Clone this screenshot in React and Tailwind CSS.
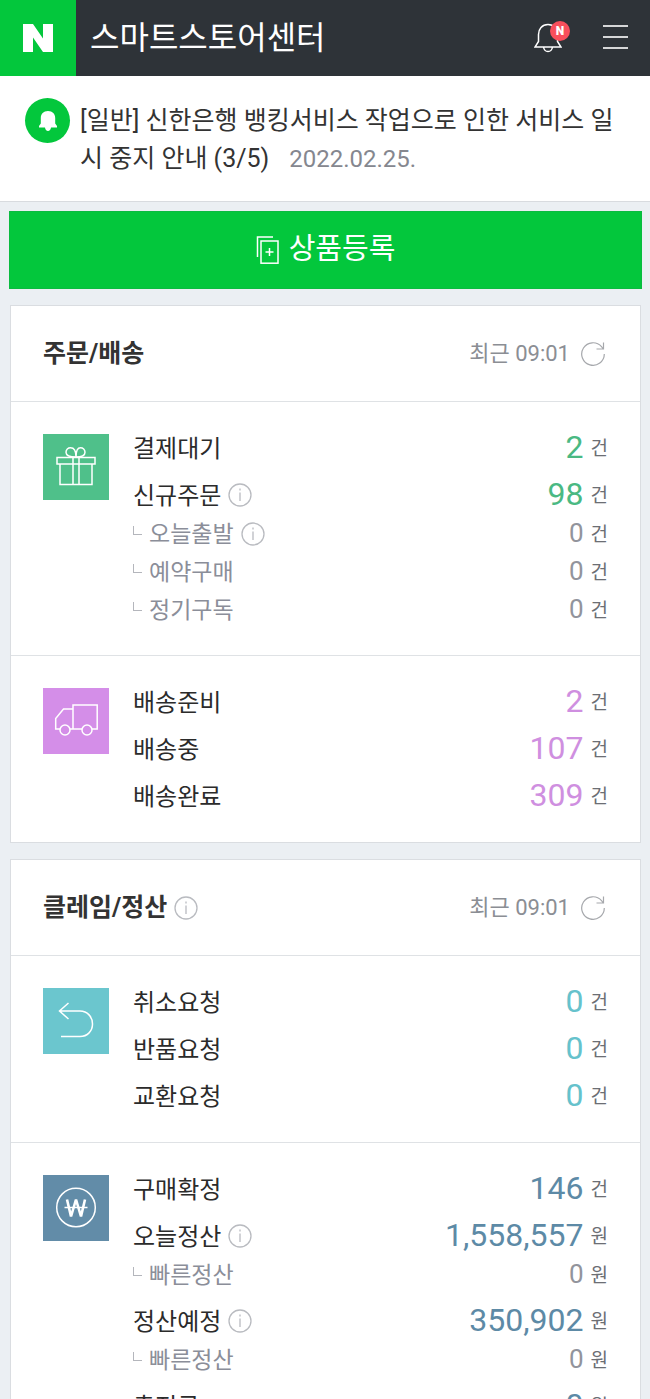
const orderSections = [
  {
    icon: "gift",
    box: "bg-[#4fc08a]",
    color: "text-[#4ab983]",
    rows: [
      { label: "결제대기", value: "2", unit: "건" },
      { label: "신규주문", value: "98", unit: "건", info: true },
      { label: "오늘출발", value: "0", unit: "건", sub: true, info: true },
      { label: "예약구매", value: "0", unit: "건", sub: true },
      { label: "정기구독", value: "0", unit: "건", sub: true },
    ],
  },
  {
    icon: "truck",
    box: "bg-[#d48ee8]",
    color: "text-[#cf8fe0]",
    rows: [
      { label: "배송준비", value: "2", unit: "건" },
      { label: "배송중", value: "107", unit: "건" },
      { label: "배송완료", value: "309", unit: "건" },
    ],
  },
];

const claimSections = [
  {
    icon: "return",
    box: "bg-[#6bc6ce]",
    color: "text-[#66c2cc]",
    rows: [
      { label: "취소요청", value: "0", unit: "건" },
      { label: "반품요청", value: "0", unit: "건" },
      { label: "교환요청", value: "0", unit: "건" },
    ],
  },
  {
    icon: "won",
    box: "bg-[#628ca8]",
    color: "text-[#5d8aa6]",
    rows: [
      { label: "구매확정", value: "146", unit: "건" },
      { label: "오늘정산", value: "1,558,557", unit: "원", info: true },
      { label: "빠른정산", value: "0", unit: "원", sub: true },
      { label: "정산예정", value: "350,902", unit: "원", info: true },
      { label: "빠른정산", value: "0", unit: "원", sub: true },
      { label: "충전금", value: "0", unit: "원" },
    ],
  },
];

// 66x66 기준 아이콘
const iconPaths = {
  gift: (
    <>
      <rect x="14" y="23.500" width="38" height="6.500" />
      <path d="M17 30v20.500h32V30M30 23.500v27M36 23.500v27" />
      <path d="M33 23c-4 0-10-.5-10-4.800 0-2.700 2-4.400 4.500-4.400 3.800 0 5.500 4.200 5.500 9.200zM33 23c4 0 9-.5 9-4.800 0-2.700-2-4.400-4.500-4.400-3.300 0-4.500 4.200-4.500 9.200z" />
    </>
  ),
  truck: (
    <>
      <path d="M17 41h-4.300V30.500L20.500 21H30M30 41V17h24.200v24H49M27 41h12" />
      <circle cx="22" cy="42" r="5" />
      <circle cx="44" cy="42" r="5" />
    </>
  ),
  return: (
    <path d="M25.500 15l-9 8 9 8M16.500 23H37c7.500 0 12.500 6 12.500 13S44.500 48.500 37 48.500H18" />
  ),
  won: (
    <>
      <circle cx="33" cy="32.500" r="19.300" />
      <path strokeWidth="2.600" strokeLinejoin="bevel" d="M24 24.500l4 17 5-17 5 17 4-17" />
      <path d="M21.500 32.500h23" />
    </>
  ),
};

function InfoButton({ label }) {
  return (
    <button type="button" aria-label={`${label} 안내`} className="ml-[7px] shrink-0">
      <svg className="size-6" viewBox="0 0 24 24" fill="none" stroke="#b9bbc0" strokeWidth="1.300">
        <circle cx="12" cy="12" r="11" />
        <path d="M12 9.500v8.500M12 5.500v2" />
      </svg>
    </button>
  );
}

function Row({ row, color }) {
  const { label, value, unit, sub, info } = row;
  return (
    <li
      className={
        sub
          ? "flex h-[38px] items-center justify-between"
          : "mt-[7px] flex h-10 items-center justify-between first:mt-0"
      }
    >
      <div className="flex items-center pt-0.5">
        {sub && <span className="mr-[7px] mb-2 size-[9px] border-b border-l border-[#b4b6bc]" />}
        <span className={sub ? "pt-0.5 text-[23px] text-[#8b8e99]" : "pt-0.5 text-2xl text-[#2b2b2b]"}>
          {label}
        </span>
        {info && <InfoButton label={label} />}
      </div>
      <a href="#" className="flex items-center">
        <span className={sub ? "text-[26px] text-[#92949c]" : `text-[32px] ${color}`}>{value}</span>
        <span className="ml-[7px] pt-1 text-[19px] text-[#6c6e74]">{unit}</span>
      </a>
    </li>
  );
}

function Card({ title, info, sections }) {
  return (
    <section className="mt-4 mr-[9px] ml-2.5 border border-[#dadde1] bg-white">
      <header className="flex h-[95px] items-center justify-between pr-[34px] pl-8">
        <div className="flex items-center">
          <h2 className="text-[25px] font-bold text-[#333]">{title}</h2>
          {info && <InfoButton label={title} />}
        </div>
        <div className="flex items-center gap-2.5">
          <span className="text-[22px] text-[#8b8e94]">최근 09:01</span>
          <button type="button" aria-label="새로고침">
            <svg className="size-[26px]" viewBox="0 0 26 26" fill="none" stroke="#a6a8ac" strokeWidth="1.200">
              <path d="M24.300 13A11.300 11.300 0 1 1 21.500 5.600L23 7.500M23.500 1.500V8h-7" />
            </svg>
          </button>
        </div>
      </header>
      {sections.map((s) => (
        <div key={s.icon} className="flex border-t border-[#dfe2e5] px-8 pt-[25px] pb-[27px]">
          <div className={`mt-[7px] size-[66px] shrink-0 ${s.box}`}>
            <svg viewBox="0 0 66 66" fill="none" stroke="#fff" strokeWidth="1.500">
              {iconPaths[s.icon]}
            </svg>
          </div>
          <ul className="ml-6 flex-1">
            {s.rows.map((row, i) => (
              <Row key={i} row={row} color={s.color} />
            ))}
          </ul>
        </div>
      ))}
    </section>
  );
}

export default function App() {
  return (
    <div className="min-h-screen bg-[#ebeff3] font-[Roboto,'Noto_Sans_CJK_KR',sans-serif]">
      <header className="flex h-[76px] items-center bg-[#2e3338]">
        <a href="#" aria-label="네이버" className="flex size-[76px] items-center justify-center bg-[#03c73c]">
          <svg className="h-7 w-[30px]" viewBox="0 0 30 28" fill="#fff">
            <path d="M0 0h10l10 14.500V0h10v28H20L10 13.500V28H0z" />
          </svg>
        </a>
        <h1 className="ml-3.5 text-[32px] text-white">스마트스토어센터</h1>
        <button type="button" aria-label="알림" className="relative ml-auto">
          <svg className="h-[30px] w-7" viewBox="0 0 28 30" fill="none" stroke="#fff" strokeWidth="1.500">
            <path d="M14 1.500c-6 0-9.500 4.500-9.500 10v7L1 24h26l-3.500-5.500v-7c0-5.500-3.500-10-9.500-10zM9.500 24c.5 3 2.300 4.500 4.500 4.500s4-1.500 4.500-4.500" />
          </svg>
          <span className="absolute -top-0.5 left-4 flex size-5 items-center justify-center rounded-full bg-[#f94f5c] text-xs font-black text-white">
            N
          </span>
        </button>
        <button type="button" aria-label="메뉴" className="mr-[22px] mb-0.5 ml-[41px] flex w-[25px] flex-col gap-[9px]">
          <span className="h-0.5 w-full bg-[#d5d6d7]" />
          <span className="h-0.5 w-full bg-[#d5d6d7]" />
          <span className="h-0.5 w-full bg-[#d5d6d7]" />
        </button>
      </header>

      <a href="#" className="flex h-[126px] border-b border-[#d8dbdf] bg-white pt-[22px] pr-8 pl-[25px]">
        <span className="flex size-[45px] shrink-0 items-center justify-center rounded-full bg-[#03c73c]">
          <svg className="h-5 w-[18px]" viewBox="0 0 18 20" fill="#fff">
            <path d="M9 0C4.500 0 1.800 3 1.800 7v5.500L0 15v1.500h6C6.300 18.500 7.400 20 9 20s2.700-1.500 3-3.500h6V15l-1.800-2.500V7c0-4-2.700-7-7.200-7z" />
          </svg>
        </span>
        <p className="mt-1 ml-2.5 text-[25px] leading-[38px] text-[#333]">
          [일반] 신한은행 뱅킹서비스 작업으로 인한 서비스 일시 중지 안내 (3/5)
          <time className="ml-5 text-2xl leading-[38px] text-[#85878f]">2022.02.25.</time>
        </p>
      </a>

      <div className="pt-[9px] pr-2 pl-[9px]">
        <button
          type="button"
          className="flex h-[78px] w-full items-center justify-center gap-2.5 border border-[#0abb40] bg-[#03c73c] text-[29px] text-white"
        >
          <svg className="h-7 w-[23px]" viewBox="0 0 23 28" fill="none" stroke="#fff" strokeWidth="1.500">
            <path d="M1.500 21V1H17" />
            <rect x="5" y="5" width="17" height="22.200" />
            <path d="M13.500 12v8M9.500 16h8" />
          </svg>
          상품등록
        </button>
      </div>

      <Card title="주문/배송" sections={orderSections} />
      <Card title="클레임/정산" info sections={claimSections} />
    </div>
  );
}
